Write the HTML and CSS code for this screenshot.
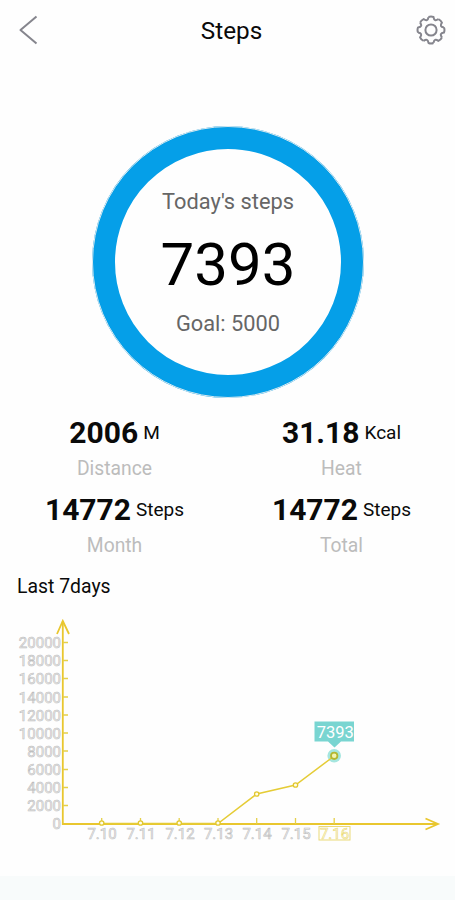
FILE: index.html
```html
<!DOCTYPE html>
<html lang="en">
<head>
    <meta charset="UTF-8">
    <meta name="viewport" content="width=device-width, initial-scale=1.0">
    <title>Steps</title>
    <link rel="stylesheet" href="styles.css">
</head>
<body>
    <header class="header">
        <svg class="back" width="22" height="32" viewBox="0 0 22 32">
            <path d="M18.5 2.5 L2.5 16 L18.5 29.5"/>
        </svg>
        <h1>Steps</h1>
        <svg class="settings" width="30" height="30" viewBox="-15 -15 30 30">
            <defs>
                <path id="tooth" d="M-2.52 -12.96 Q0 -14 2.52 -12.96 Q3.25 -7.85 7.38 -10.94"/>
            </defs>
            <use href="#tooth"/>
            <use href="#tooth" transform="rotate(45)"/>
            <use href="#tooth" transform="rotate(90)"/>
            <use href="#tooth" transform="rotate(135)"/>
            <use href="#tooth" transform="rotate(180)"/>
            <use href="#tooth" transform="rotate(225)"/>
            <use href="#tooth" transform="rotate(270)"/>
            <use href="#tooth" transform="rotate(315)"/>
            <circle r="5.6"/>
        </svg>
    </header>
    <main>
        <div class="ring">
            <div class="ring-title">Today's steps</div>
            <div class="ring-value">7393</div>
            <div class="ring-goal">Goal: 5000</div>
        </div>

        <div class="stats">
            <div class="stat">
                <div class="stat-value"><b>2006</b><span>M</span></div>
                <div class="stat-label">Distance</div>
            </div>
            <div class="stat">
                <div class="stat-value"><b>31.18</b><span>Kcal</span></div>
                <div class="stat-label">Heat</div>
            </div>
            <div class="stat">
                <div class="stat-value"><b>14772</b><span>Steps</span></div>
                <div class="stat-label">Month</div>
            </div>
            <div class="stat">
                <div class="stat-value"><b>14772</b><span>Steps</span></div>
                <div class="stat-label">Total</div>
            </div>
        </div>

        <h2>Last 7days</h2>
        <svg class="chart" width="455" height="240" viewBox="0 610 455 240">
            <!-- axes -->
            <path class="axis" d="M62.8 621 V824 H438"/>
            <path class="arrow" d="M57 634 L62.8 621 L69 634 M425.5 818.5 L438 824 L425.5 829.5"/>
            <path class="tick" d="M63 642.5h5 M63 660.5h5 M63 678.5h5 M63 697h5 M63 715h5 M63 733h5 M63 751h5 M63 769.5h5 M63 787.5h5 M63 805.5h5"/>
            <path class="tick" d="M101.7 824v-6 M140.5 824v-6 M179.2 824v-6 M218 824v-6 M256.7 824v-6 M295.5 824v-6 M334.2 824v-6"/>

            <g class="y-labels">
                <text x="61" y="648">20000</text>
                <text x="61" y="666">18000</text>
                <text x="61" y="684">16000</text>
                <text x="61" y="702.5">14000</text>
                <text x="61" y="720.5">12000</text>
                <text x="61" y="738.5">10000</text>
                <text x="61" y="756.5">8000</text>
                <text x="61" y="775">6000</text>
                <text x="61" y="793">4000</text>
                <text x="61" y="811">2000</text>
                <text x="61" y="829">0</text>
            </g>
            <g class="x-labels">
                <text x="102" y="838.5">7.10</text>
                <text x="141" y="838.5">7.11</text>
                <text x="180" y="838.5">7.12</text>
                <text x="218.5" y="838.5">7.13</text>
                <text x="257" y="838.5">7.14</text>
                <text x="296" y="838.5">7.15</text>
                <text class="today" x="334.5" y="838.5">7.16</text>
            </g>
            <rect class="today-box" x="319" y="826.5" width="31" height="13.5"/>

            <!-- data -->
            <circle class="halo" cx="334.2" cy="755.8" r="6.8"/>
            <path class="line" d="M101.7 823.5 H218 L256.7 794 L295.5 785 L334.2 756"/>
            <g class="dots">
                <circle cx="101.7" cy="823" r="2.2"/>
                <circle cx="140.5" cy="823" r="2.2"/>
                <circle cx="179.2" cy="823" r="2.2"/>
                <circle cx="218" cy="823" r="2.2"/>
                <circle cx="256.7" cy="794" r="2.2"/>
                <circle cx="295.5" cy="785" r="2.2"/>
            </g>
            <circle class="current" cx="334.2" cy="755.8" r="3.2"/>
            <path class="bubble" d="M314.5 721.5 H354 V741.5 H341 L334.5 747.5 L328 741.5 H314.5 Z"/>
            <text class="bubble-text" x="335.3" y="738">7393</text>
        </svg>
    </main>
    <footer></footer>
</body>
</html>
```
FILE: styles.css
```css
body {
    font-family: Roboto, "Liberation Sans", sans-serif;
    margin: 0;
    height: 900px;
    display: flex;
    flex-direction: column;
    background-color: #fefefe;
    color: #0a0a0a;
    overflow: hidden;
}
.header {
    display: flex;
    align-items: center;
    justify-content: space-between;
    height: 60px;
    padding: 0 9px 0 18px;
}
.header h1 {
    margin: 1px 0 0 7px;
    font-size: 24.3px;
    font-weight: 400;
}
.header svg {
    fill: none;
    stroke: #85858d;
    stroke-width: 2;
    stroke-linejoin: round;
}
.ring {
    box-sizing: border-box;
    width: 272px;
    height: 272px;
    margin: 66px 0 0 92px;
    padding-top: 40px;
    border: 23px solid #059fe8;
    border-radius: 50%;
    outline: 1px solid #dceaf0;
    outline-offset: -1px;
    text-align: center;
}
.ring-title,
.ring-goal {
    font-size: 21.8px;
    line-height: 26px;
    color: #666;
}
.ring-value {
    font-size: 60px;
    line-height: 70px;
    margin: 15px 0 11px;
    color: #000;
}
.stats {
    display: grid;
    grid-template-columns: 1fr 1fr;
    margin: 14px 0 0 1px;
}
.stat {
    height: 77px;
    text-align: center;
}
.stat-value {
    display: flex;
    justify-content: center;
    align-items: baseline;
    gap: 5px;
    height: 42px;
    line-height: 42px;
}
.stat-value b {
    font-size: 30px;
    font-weight: 700;
}
.stat-value span {
    font-size: 19px;
    position: relative;
    top: -4px;
}
.stat-label {
    font-size: 19.3px;
    line-height: 30px;
    color: #bcbcbc;
}
h2 {
    margin: 9px 0 0 17px;
    font-size: 19.4px;
    font-weight: 400;
    line-height: 24px;
    height: 35px;
}
.chart {
    display: block;
}
.axis,
.arrow {
    fill: none;
    stroke: #e9c72f;
    stroke-width: 1.8;
}
.tick {
    stroke: #e5d04a;
    stroke-width: 1.3;
}
.y-labels text,
.x-labels text {
    font-size: 15px;
    fill: #f0f0f0;
    stroke: #bebebe;
    stroke-width: 0.6;
}
.y-labels {
    text-anchor: end;
}
.x-labels {
    text-anchor: middle;
}
.x-labels .today {
    fill: #fffbe0;
    stroke: #ead978;
}
.today-box {
    fill: none;
    stroke: #ead978;
    stroke-width: 1;
}
.line {
    fill: none;
    stroke: #e5cc36;
    stroke-width: 1.5;
}
.dots circle {
    fill: #fffde8;
    stroke: #e2c72e;
    stroke-width: 1.3;
}
.halo {
    fill: #a5e6df;
}
.current {
    fill: #f4f3b0;
    stroke: #b3b731;
    stroke-width: 1.8;
}
.bubble {
    fill: #79d5d1;
}
.bubble-text {
    font-size: 16.5px;
    fill: #fff;
    text-anchor: middle;
}
footer {
    height: 24px;
    margin-top: auto;
    background-color: #f8fbfb;
}
```
